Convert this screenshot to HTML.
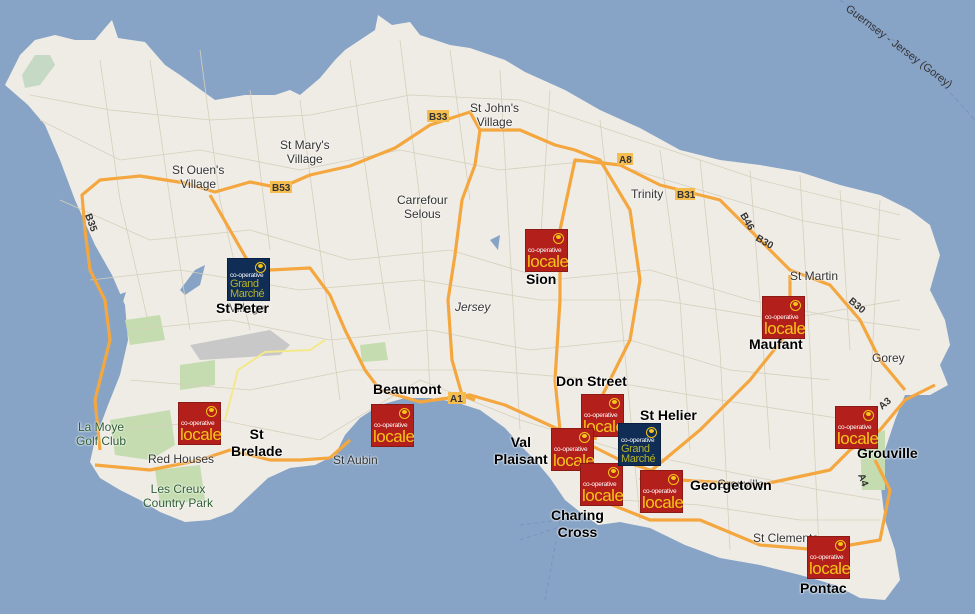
<!DOCTYPE html>
<html><head><meta charset="utf-8"><style>
html,body{margin:0;padding:0}
body{width:975px;height:614px;overflow:hidden;background:#87a4c6;position:relative;font-family:"Liberation Sans",sans-serif}
svg{position:absolute;left:0;top:0}
.lg{position:absolute;width:43px;height:43px;background:#b3201c;box-sizing:border-box;border:1px solid #8a1a16}
.lg .co{position:absolute;left:2px;top:17px;font-size:6.5px;color:#fff;letter-spacing:-0.2px}
.lg .lo{position:absolute;left:1px;top:23px;font-size:17px;color:#f5c518;letter-spacing:-0.5px;line-height:17px}
.lg .tr{position:absolute;right:3px;top:3px;width:11px;height:11px;border-radius:50%;border:1px solid #f5c518;box-sizing:border-box}
.lg .tr:after{content:"";position:absolute;left:2px;top:1px;width:5px;height:4px;background:#f5c518;border-radius:50%}
.gm{background:#0f2d55;border-color:#0a2040}
.gm .co{top:13px}
.gm .gg{position:absolute;left:2px;top:20px;font-size:11px;line-height:10px;color:#b6b32a;letter-spacing:-0.4px}
.t{position:absolute;font-size:12px;color:#333;text-align:center;line-height:14px;text-shadow:0 0 2px #fff,0 0 2px #fff}
.b{position:absolute;font-size:14px;font-weight:bold;color:#000;line-height:17px;text-align:center;text-shadow:0 0 2px #fff,0 0 2px #fff}
.g{color:#2f5d34}
</style></head><body>
<svg width="975" height="614" viewBox="0 0 975 614">
<path fill="#efece6" d="M5,85 L20,55 L35,40 L55,35 L75,40 L95,40 L105,28 L112,20 L118,38 L145,42 L165,65 L180,75 L215,100 L245,95 L275,95 L290,90 L300,95 L320,78 L335,60 L345,50 L375,30 L378,15 L392,25 L410,22 L420,35 L450,45 L470,48 L505,60 L525,72 L565,90 L600,110 L640,128 L680,150 L720,160 L760,165 L800,172 L840,185 L880,195 L910,210 L930,225 L940,255 L930,290 L945,320 L950,345 L940,365 L948,385 L930,395 L905,395 L895,420 L885,450 L880,480 L885,520 L895,550 L900,580 L885,600 L860,598 L835,585 L800,575 L760,565 L720,558 L685,545 L650,528 L620,522 L598,525 L580,512 L565,500 L550,478 L535,460 L520,445 L505,428 L480,410 L455,402 L430,398 L405,398 L380,405 L360,418 L345,435 L335,455 L315,465 L290,468 L268,478 L250,495 L232,512 L210,520 L185,522 L160,512 L140,500 L120,490 L100,478 L90,462 L95,440 L108,405 L120,375 L128,340 L125,305 L112,275 L95,245 L75,200 L60,160 L45,125 L28,105 Z"/>
<path fill="#c5d9c4" d="M22,75 L35,55 L50,55 L55,65 L40,85 L25,88 Z"/>
<g fill="#c4dcb0">
<path d="M125,320 L160,315 L165,340 L130,345 Z"/>
<path d="M180,365 L215,360 L215,385 L180,390 Z"/>
<path d="M110,420 L170,410 L175,445 L150,460 L115,455 Z"/>
<path d="M155,470 L200,465 L205,500 L160,505 Z"/>
<path d="M360,345 L385,342 L388,360 L362,362 Z"/>
<path d="M860,440 L885,430 L885,490 L862,490 Z"/>
</g>
<g fill="#87a4c6"><path d="M195,270 L205,265 L200,285 L185,295 L180,290 Z"/><path d="M490,240 L500,235 L498,250 Z"/><path d="M118,295 L126,292 L122,305 Z"/></g>
<path fill="#c8c8c8" d="M190,345 L270,330 L290,345 L280,355 L200,360 Z"/>
<g stroke="#d6cfbb" stroke-width="0.8" fill="none">
<path d="M40,120 L120,160 L200,150 L300,170 L400,150 L500,170 L600,160 L700,190 L800,220 L900,240"/>
<path d="M60,200 L150,240 L250,230 L350,260 L450,250 L550,280 L650,270 L750,300 L850,320 L920,330"/>
<path d="M130,330 L230,320 L330,340 L430,330 L530,350 L630,340 L730,370 L830,380"/>
<path d="M120,430 L220,420 L320,440 L420,380 L520,420 L620,450 L720,470 L820,490 L880,500"/>
<path d="M30,95 L110,110 L210,120 L310,115 L410,95 L520,100 L640,140 L760,180 L900,215"/>
<path d="M90,280 L180,270 L300,290 L420,280 L540,300 L660,300 L780,320 L900,300"/>
<path d="M130,380 L250,390 L350,370 L480,370 L600,380 L720,400 L850,420"/>
<path d="M620,500 L700,505 L800,520 L880,520"/>
<path d="M100,60 L120,200 L150,330 M200,50 L220,200 L250,330 M300,100 L320,250 L340,400 M400,40 L420,200 L430,390 M500,70 L510,250 L520,430 M600,120 L620,300 L640,520 M700,160 L720,350 L730,550 M800,175 L810,350 L820,570 M880,200 L870,400"/>
<path d="M150,60 L170,200 L190,330 M250,90 L270,250 M350,60 L370,200 L390,330 M450,50 L470,200 M550,90 L540,250 M660,150 L680,300 L690,450 M750,170 L760,300 L770,450 M840,190 L850,350"/>
</g>
<g stroke="#f4a73f" stroke-width="3.2" fill="none" stroke-linejoin="round">
<path d="M100,450 L95,400 L110,340 L105,300 L90,270 L85,230 L82,195 L100,180 L140,176 L185,183 L215,192 L250,182 L280,188 L310,175 L350,166 L395,148 L430,125 L470,112 L480,130 L475,165 L462,200 L455,255 L448,300 L452,360 L462,395 L475,400"/>
<path d="M210,195 L230,230 L250,265 L270,270 L310,268 L330,295 L345,330 L365,370 L380,390 L420,402 L470,395 L505,405 L560,430 L590,445 L620,460 L680,480 L760,485 L830,470 L850,450 L880,430 L905,400 L935,385"/>
<path d="M560,430 L555,380 L560,300 L560,230 L575,160 L620,165 L660,185 L720,200 L760,240 L790,270 L830,285 L860,320 L880,360 L905,390"/>
<path d="M575,150 L600,160 L630,210 L640,280 L630,340 L600,400 L595,440"/>
<path d="M640,480 L700,430 L750,380 L790,330 L790,275"/>
<path d="M600,500 L650,520 L700,520 L760,545 L820,550 L880,540 L890,490 L875,460"/>
<path d="M95,465 L150,470 L200,460 L230,450 L270,460 L300,460 L330,458"/>
<path d="M480,130 L520,130 L555,145 L575,150"/>
<path d="M330,458 L350,440"/>
</g>
<path d="M225,420 L238,370 L265,352 L310,350 L325,340" stroke="#f3e98a" stroke-width="2" fill="none"/>
<path d="M840,0 L920,60 L975,120" stroke="#7c92c0" stroke-width="1" stroke-dasharray="5,3" fill="none"/>
<path d="M520,525 L560,520 M520,540 L565,525 M545,600 L560,520" stroke="#7c92c0" stroke-width="1" stroke-dasharray="4,3" fill="none"/>
<text x="845" y="10" font-family="Liberation Sans" font-size="11" fill="#333" transform="rotate(37 845 10)">Guernsey - Jersey (Gorey)</text>
<g font-family="Liberation Sans" font-size="10" font-weight="bold" fill="#333">
<rect x="270" y="181" width="22" height="12" fill="#f5bd4f"/><text x="272" y="191">B53</text>
<rect x="427" y="110" width="22" height="12" fill="#f5bd4f"/><text x="429" y="120">B33</text>
<rect x="675" y="188" width="20" height="12" fill="#f5bd4f"/><text x="677" y="198">B31</text>
<rect x="617" y="153" width="16" height="12" fill="#f5bd4f"/><text x="619" y="163">A8</text>
<rect x="448" y="392" width="18" height="12" fill="#f5bd4f"/><text x="450" y="402">A1</text>
<text x="85" y="215" transform="rotate(70 85 215)">B35</text>
<text x="740" y="215" transform="rotate(60 740 215)">B46</text>
<text x="755" y="240" transform="rotate(30 755 240)">B30</text>
<text x="848" y="302" transform="rotate(40 848 302)">B30</text>
<text x="882" y="410" transform="rotate(-40 882 410)">A3</text>
<text x="858" y="475" transform="rotate(70 858 475)">A4</text>
</g>
</svg>
<div class="t" style="left:172px;top:163px">St Ouen's<br>Village</div>
<div class="t" style="left:280px;top:138px">St Mary's<br>Village</div>
<div class="t" style="left:470px;top:101px">St John's<br>Village</div>
<div class="t" style="left:397px;top:193px">Carrefour<br>Selous</div>
<div class="t" style="left:631px;top:187px">Trinity</div>
<div class="t" style="left:790px;top:269px">St Martin</div>
<div class="t" style="left:872px;top:351px">Gorey</div>
<div class="t" style="left:455px;top:300px;font-style:italic">Jersey</div>
<div class="t" style="left:229px;top:301px">Village</div>
<div class="t" style="left:148px;top:452px">Red Houses</div>
<div class="t" style="left:333px;top:453px">St Aubin</div>
<div class="t" style="left:717px;top:477px">Grouville</div>
<div class="t" style="left:753px;top:531px">St Clements</div>
<div class="t g" style="left:76px;top:420px">La Moye<br>Golf Club</div>
<div class="t g" style="left:143px;top:482px">Les Creux<br>Country Park</div>
<div class="b" style="left:526px;top:271px">Sion</div>
<div class="b" style="left:216px;top:300px">St Peter</div>
<div class="b" style="left:749px;top:336px">Maufant</div>
<div class="b" style="left:373px;top:381px">Beaumont</div>
<div class="b" style="left:556px;top:373px">Don Street</div>
<div class="b" style="left:640px;top:407px">St Helier</div>
<div class="b" style="left:231px;top:426px">St<br>Brelade</div>
<div class="b" style="left:494px;top:434px">Val<br>Plaisant</div>
<div class="b" style="left:857px;top:445px">Grouville</div>
<div class="b" style="left:690px;top:477px">Georgetown</div>
<div class="b" style="left:551px;top:507px">Charing<br>Cross</div>
<div class="b" style="left:800px;top:580px">Pontac</div>
<div class="lg" style="left:525px;top:229px"><div class="tr"></div><div class="co">co-operative</div><div class="lo">locale</div></div>
<div class="lg" style="left:762px;top:296px"><div class="tr"></div><div class="co">co-operative</div><div class="lo">locale</div></div>
<div class="lg" style="left:178px;top:402px"><div class="tr"></div><div class="co">co-operative</div><div class="lo">locale</div></div>
<div class="lg" style="left:371px;top:404px"><div class="tr"></div><div class="co">co-operative</div><div class="lo">locale</div></div>
<div class="lg" style="left:835px;top:406px"><div class="tr"></div><div class="co">co-operative</div><div class="lo">locale</div></div>
<div class="lg" style="left:807px;top:536px"><div class="tr"></div><div class="co">co-operative</div><div class="lo">locale</div></div>
<div class="lg" style="left:581px;top:394px"><div class="tr"></div><div class="co">co-operative</div><div class="lo">locale</div></div>
<div class="lg" style="left:551px;top:428px"><div class="tr"></div><div class="co">co-operative</div><div class="lo">locale</div></div>
<div class="lg" style="left:580px;top:463px"><div class="tr"></div><div class="co">co-operative</div><div class="lo">locale</div></div>
<div class="lg" style="left:640px;top:470px"><div class="tr"></div><div class="co">co-operative</div><div class="lo">locale</div></div>
<div class="lg gm" style="left:227px;top:258px"><div class="tr"></div><div class="co">co-operative</div><div class="gg">Grand<br>Marché</div></div>
<div class="lg gm" style="left:618px;top:423px"><div class="tr"></div><div class="co">co-operative</div><div class="gg">Grand<br>Marché</div></div>
</body></html>
